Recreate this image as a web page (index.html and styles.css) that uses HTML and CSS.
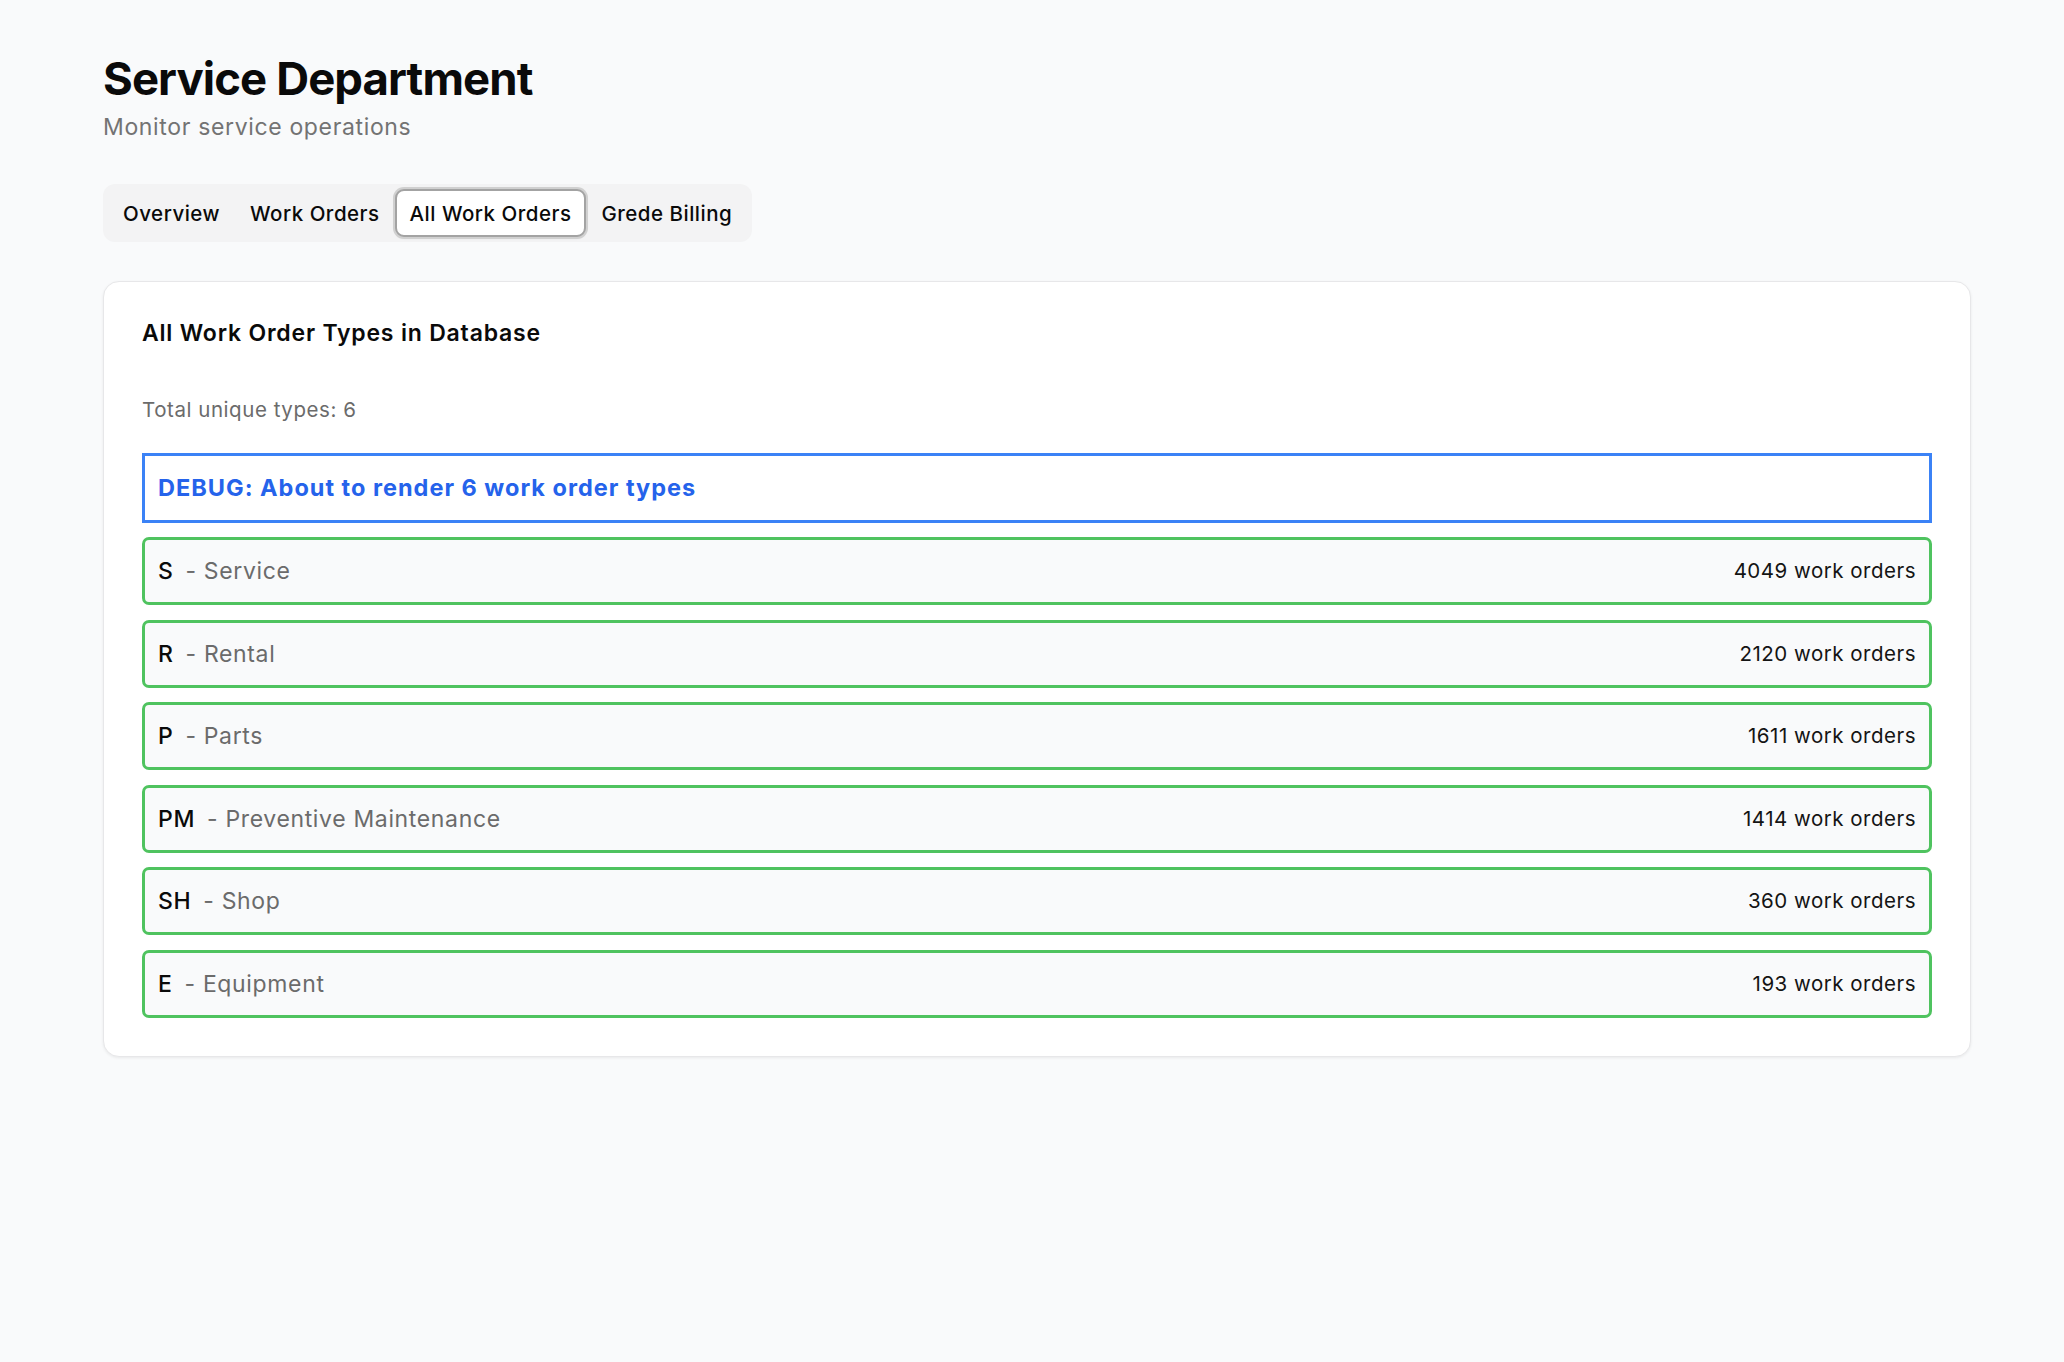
FILE: index.html
```html
<!DOCTYPE html>
<html lang="en">
<head>
<meta charset="utf-8">
<title>Service Department</title>
<link rel="stylesheet" href="styles.css">
</head>
<body>
<main class="page">
  <header class="header">
    <h1 class="title">Service Department</h1>
    <p class="subtitle">Monitor service operations</p>
  </header>

  <nav class="tabs">
    <button class="tab">Overview</button>
    <button class="tab">Work Orders</button>
    <button class="tab tab-active">All Work Orders</button>
    <button class="tab">Grede Billing</button>
  </nav>

  <section class="card">
    <h2 class="card-title">All Work Order Types in Database</h2>
    <p class="total">Total unique types: 6</p>
    <div class="debug">DEBUG: About to render 6 work order types</div>
    <ul class="types">
      <li class="type-row"><span class="type-name"><span class="code">S</span><span class="desc">- Service</span></span><span class="count">4049 work orders</span></li>
      <li class="type-row"><span class="type-name"><span class="code">R</span><span class="desc">- Rental</span></span><span class="count">2120 work orders</span></li>
      <li class="type-row"><span class="type-name"><span class="code">P</span><span class="desc">- Parts</span></span><span class="count">1611 work orders</span></li>
      <li class="type-row"><span class="type-name"><span class="code">PM</span><span class="desc">- Preventive Maintenance</span></span><span class="count">1414 work orders</span></li>
      <li class="type-row"><span class="type-name"><span class="code">SH</span><span class="desc">- Shop</span></span><span class="count">360 work orders</span></li>
      <li class="type-row"><span class="type-name"><span class="code">E</span><span class="desc">- Equipment</span></span><span class="count">193 work orders</span></li>
    </ul>
  </section>
</main>
</body>
</html>
```

FILE: styles.css
```css
* {
  box-sizing: border-box;
}

html, body {
  margin: 0;
  padding: 0;
}

body {
  background: #f9fafb;
  font-family: Inter, "Noto Sans", "Liberation Sans", sans-serif;
  color: #0a0a0a;
}

.page {
  padding: 54px 93px 80px 103px;
}

.header {
  margin-bottom: 39px;
}

.title {
  margin: 0;
  font-size: 45.5px;
  line-height: 50px;
  font-weight: 700;
  letter-spacing: -0.9px;
  color: #0a0a0a;
}

.subtitle {
  margin: 6px 0 0;
  font-size: 23px;
  line-height: 35px;
  color: #737373;
  font-weight: 400;
  letter-spacing: 0.65px;
}

.tabs {
  display: inline-flex;
  align-items: center;
  height: 58px;
  padding: 5px;
  background: #f3f3f4;
  border-radius: 12px;
  margin-bottom: 39px;
}

.tab {
  appearance: none;
  border: 0;
  background: transparent;
  font-family: inherit;
  font-size: 20.5px;
  font-weight: 500;
  letter-spacing: 0.5px;
  color: #0a0a0a;
  height: 48px;
  padding: 0 15px;
  border-radius: 9px;
  cursor: pointer;
}

.tab-active {
  background: #ffffff;
  border: 2px solid #a3a3a3;
  padding: 0 13px;
  box-shadow: 0 0 0 2px #d0d0d0, 0 1px 3px rgba(0, 0, 0, 0.12);
}

.card {
  background: #ffffff;
  border: 1px solid #e7e7e9;
  border-radius: 16px;
  box-shadow: 0 1px 3px rgba(0, 0, 0, 0.07);
  padding: 34px 38px 38px;
}

.card-title {
  margin: 0;
  font-size: 23px;
  line-height: 35px;
  font-weight: 600;
  letter-spacing: 0.8px;
}

.total {
  margin: 44px 0 0;
  font-size: 20.5px;
  line-height: 30px;
  color: #6b6b6b;
  letter-spacing: 0.55px;
}

.debug {
  margin-top: 28px;
  border: 3px solid #3b82f6;
  background: #ffffff;
  padding: 14px 13px;
  font-size: 23.5px;
  line-height: 36px;
  font-weight: 700;
  color: #2563eb;
  letter-spacing: 1px;
}

.types {
  list-style: none;
  margin: 14px 0 0;
  padding: 0;
  display: flex;
  flex-direction: column;
  gap: 14.5px;
}

.type-row {
  display: flex;
  align-items: center;
  justify-content: space-between;
  border: 3px solid #4fc35f;
  border-radius: 7px;
  background: #f9fafb;
  padding: 14px 13px;
  height: 68px;
}

.type-name {
  display: flex;
  align-items: baseline;
  font-size: 23px;
  line-height: 34px;
  letter-spacing: 0.65px;
}

.code {
  font-weight: 500;
  color: #0a0a0a;
}

.desc {
  margin-left: 12px;
  color: #6b6b6b;
}

.count {
  font-size: 20.5px;
  line-height: 30px;
  color: #141414;
  letter-spacing: 0.5px;
}
```
